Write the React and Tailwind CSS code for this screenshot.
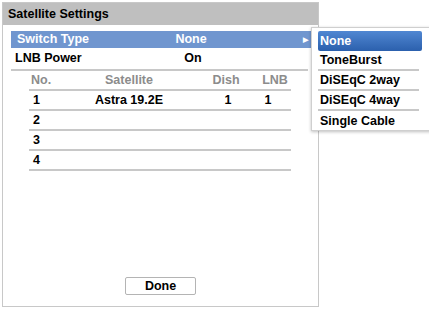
import React from 'react';

const rows = [
    { no: '1', sat: 'Astra 19.2E', dish: '1', lnb: '1' },
    { no: '2', sat: '', dish: '', lnb: '' },
    { no: '3', sat: '', dish: '', lnb: '' },
    { no: '4', sat: '', dish: '', lnb: '' },
];

const options = ['ToneBurst', 'DiSEqC 2way', 'DiSEqC 4way', 'Single Cable'];

const App = () => {
    return (
        <div
            className="relative w-[429px] h-[309px] overflow-hidden bg-white text-[12.5px] font-bold text-black"
            style={{ fontFamily: '"Liberation Sans", Arial, sans-serif' }}
        >
            {/* Main panel */}
            <div className="ml-[2px] mt-[2px] w-[317px] h-[305px] border border-[#c8c8c8] flex flex-col">
                <div className="h-[22px] bg-[#bfbfbf] flex items-center px-[5px] text-[12.5px]">
                    Satellite Settings
                </div>

                <div className="mt-[6px] ml-[8px] mr-[4px] h-[17px] bg-[#7096cf] text-white flex items-center">
                    <span className="pl-[6px] w-[152px]">Switch Type</span>
                    <span className="w-[56px] text-center">None</span>
                    <span className="ml-auto mr-[6px] text-[7px] leading-none">▶</span>
                </div>

                <div className="ml-[8px] mr-[10px] h-[23px] border-b-2 border-[#c8c8c8] flex items-center">
                    <span className="pl-[4px] w-[157px]">LNB Power</span>
                    <span className="w-[50px] text-center">On</span>
                </div>

                {/* Table */}
                <div className="ml-[26px] w-[262px] flex flex-col">
                    <div className="h-[20px] border-b-2 border-[#c8c8c8] flex items-center text-[#8c8c8c]">
                        <span className="w-[60px] pl-[2px]">No.</span>
                        <span className="w-[80px] text-center">Satellite</span>
                        <span className="w-[42px]"></span>
                        <span className="w-[30px] text-center">Dish</span>
                        <span className="w-[19px]"></span>
                        <span className="w-[30px] text-center">LNB</span>
                    </div>
                    {rows.map((r) => (
                        <div key={r.no} className="h-[20px] border-b-2 border-[#c8c8c8] flex items-center">
                            <span className="w-[60px] pl-[4px]">{r.no}</span>
                            <span className="w-[80px] text-center">{r.sat}</span>
                            <span className="w-[42px]"></span>
                            <span className="w-[30px] text-center pl-[4px]">{r.dish}</span>
                            <span className="w-[19px]"></span>
                            <span className="w-[30px] text-center pr-[14px]">{r.lnb}</span>
                        </div>
                    ))}
                </div>

                <div className="mt-auto mb-[11px] flex justify-center">
                    <button className="w-[71px] h-[18px] border border-[#b4b4b4] rounded-[2px] bg-white flex items-center justify-center text-[12.5px] font-bold">
                        Done
                    </button>
                </div>
            </div>

            {/* Dropdown */}
            <div className="absolute left-[311px] top-[27px] w-[125px] h-[104px] bg-white border border-[#cfcfcf] shadow-[0_1px_3px_rgba(0,0,0,0.25)] pt-[3px] pl-[6px]">
                <div className="w-[104px] h-[20px] rounded-[2px] bg-gradient-to-b from-[#5087d2] to-[#2b60ad] text-white flex items-center pl-[2px]">
                    None
                </div>
                {options.map((o, i) => (
                    <div
                        key={o}
                        className={`w-[101px] h-[20px] flex items-center pl-[2px] ${i < options.length - 1 ? 'border-b-2 border-[#c8c8c8]' : ''}`}
                    >
                        {o}
                    </div>
                ))}
            </div>
        </div>
    );
};

export default App;
